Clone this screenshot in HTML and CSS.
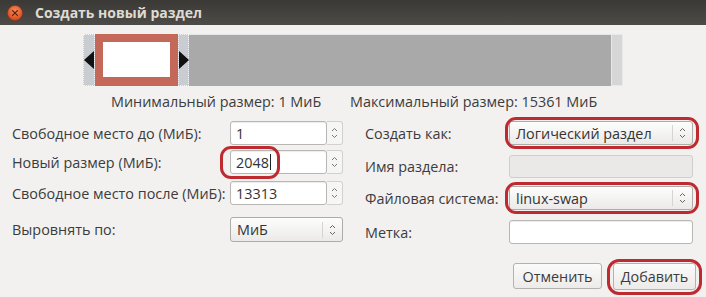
FILE: index.html
```html
<!DOCTYPE html>
<html lang="ru">
  <head>
    <meta charset="UTF-8" />
    <title>Создать новый раздел</title>
    <link rel="stylesheet" href="styles.css">
  </head>
  <body>
    <div class="window">
      <div class="titlebar">
        <svg class="close" width="16" height="16" viewBox="0 0 16 16">
          <defs>
            <radialGradient id="cg" cx="50%" cy="35%" r="65%">
              <stop offset="0" stop-color="#f58a5a" />
              <stop offset="1" stop-color="#d9471a" />
            </radialGradient>
          </defs>
          <circle cx="8" cy="8" r="7.5" fill="url(#cg)" stroke="#8a3416" stroke-width="0.6" />
          <path d="M5.6 5.6 L10.4 10.4 M10.4 5.6 L5.6 10.4" stroke="#5a2412" stroke-width="1.3" stroke-linecap="round" />
        </svg>
        <span class="title">Создать новый раздел</span>
      </div>

      <div class="content">
        <div class="disk">
          <div class="slot slot-left"><span class="arrow arrow-left"></span></div>
          <div class="part"><div class="part-inner"></div></div>
          <div class="slot slot-right"><span class="arrow arrow-right"></span></div>
          <div class="free"></div>
          <div class="disk-end"></div>
        </div>

        <div class="limits">
          <span class="limit-min">Минимальный размер: 1 МиБ</span>
          <span>Максимальный размер: 15361 МиБ</span>
        </div>

        <div class="form">
          <div class="col col-left">
            <div class="row">
              <label>Свободное место до (МиБ):</label>
              <div class="spin">
                <div class="entry">1</div>
                <div class="spin-btns">
                  <svg width="7" height="14" viewBox="0 0 7 14"><path d="M1 5 L3.5 2.5 L6 5 M1 9 L3.5 11.5 L6 9" fill="none" stroke="#7a7a7a" stroke-width="1" /></svg>
                </div>
              </div>
            </div>
            <div class="row row-2">
              <label>Новый размер (МиБ):</label>
              <div class="spin">
                <div class="entry">2048<span class="caret"></span></div>
                <div class="spin-btns">
                  <svg width="7" height="14" viewBox="0 0 7 14"><path d="M1 5 L3.5 2.5 L6 5 M1 9 L3.5 11.5 L6 9" fill="none" stroke="#7a7a7a" stroke-width="1" /></svg>
                </div>
                <span class="mark mark-size"></span>
              </div>
            </div>
            <div class="row row-3">
              <label>Свободное место после (МиБ):</label>
              <div class="spin">
                <div class="entry">13313</div>
                <div class="spin-btns">
                  <svg width="7" height="14" viewBox="0 0 7 14"><path d="M1 5 L3.5 2.5 L6 5 M1 9 L3.5 11.5 L6 9" fill="none" stroke="#7a7a7a" stroke-width="1" /></svg>
                </div>
              </div>
            </div>
            <div class="row row-4">
              <label>Выровнять по:</label>
              <div class="combo combo-small">
                <span class="combo-text">МиБ</span>
                <span class="combo-arrows">
                  <svg width="7" height="14" viewBox="0 0 7 14"><path d="M1 5 L3.5 2.5 L6 5 M1 9 L3.5 11.5 L6 9" fill="none" stroke="#666" stroke-width="1" /></svg>
                </span>
              </div>
            </div>
          </div>

          <div class="col col-right">
            <div class="row">
              <label>Создать как:</label>
              <div class="combo">
                <span class="combo-text">Логический раздел</span>
                <span class="combo-arrows">
                  <svg width="7" height="14" viewBox="0 0 7 14"><path d="M1 5 L3.5 2.5 L6 5 M1 9 L3.5 11.5 L6 9" fill="none" stroke="#666" stroke-width="1" /></svg>
                </span>
                <span class="mark"></span>
              </div>
            </div>
            <div class="row row-r2">
              <label>Имя раздела:</label>
              <div class="entry entry-wide disabled"></div>
            </div>
            <div class="row row-r3">
              <label>Файловая система:</label>
              <div class="combo">
                <span class="combo-text">linux-swap</span>
                <span class="combo-arrows">
                  <svg width="7" height="14" viewBox="0 0 7 14"><path d="M1 5 L3.5 2.5 L6 5 M1 9 L3.5 11.5 L6 9" fill="none" stroke="#666" stroke-width="1" /></svg>
                </span>
                <span class="mark"></span>
              </div>
            </div>
            <div class="row row-r4">
              <label>Метка:</label>
              <div class="entry entry-wide"></div>
            </div>
          </div>
        </div>

        <div class="actions">
          <button class="btn btn-cancel">Отменить</button>
          <button class="btn btn-add">Добавить<span class="mark mark-btn"></span></button>
        </div>
      </div>
    </div>
  </body>
</html>
```

FILE: styles.css
```css
body {
  margin: 0;
  padding: 0;
  width: 706px;
  height: 297px;
  overflow: hidden;
  font-family: "Open Sans", "DejaVu Sans", sans-serif;
  font-size: 14.4px;
  color: #3c3c3c;
  background-color: #f2f1f0;
}

.window {
  width: 706px;
  height: 297px;
  display: flex;
  flex-direction: column;
}

/* Title bar */
.titlebar {
  height: 25px;
  display: flex;
  align-items: center;
  background: linear-gradient(#3a3935, #4d4b47);
  flex-shrink: 0;
}

.close {
  margin-left: 7px;
  margin-right: 12px;
}

.title {
  color: #dfdbd2;
  font-weight: bold;
  font-size: 14px;
}

.content {
  display: flex;
  flex-direction: column;
}

/* Partition bar */
.disk {
  display: flex;
  margin-top: 9px;
  margin-left: 83px;
  width: 540px;
  height: 52px;
}

.slot {
  display: flex;
  align-items: center;
  background-color: #c9ccd0;
  border: 1px dotted #f4f4f4;
  box-sizing: border-box;
}

.slot-left {
  width: 12px;
  justify-content: flex-end;
}

.slot-right {
  width: 11px;
  justify-content: flex-start;
}

.arrow {
  width: 0;
  height: 0;
  border-top: 9px solid transparent;
  border-bottom: 9px solid transparent;
}

.arrow-left {
  border-right: 10px solid #111;
}

.arrow-right {
  border-left: 10px solid #111;
}

.part {
  width: 83px;
  background-color: #c4685a;
  padding: 8px 8px 9px 8px;
  box-sizing: border-box;
}

.part-inner {
  height: 100%;
  background-color: #fff;
}

.free {
  flex: 1;
  background-color: #a9a9a9;
  border-top: 1px solid #e6e6e6;
}

.disk-end {
  width: 12px;
  background-color: #d6d6d6;
  border: 1px solid #e8e8e8;
  box-sizing: border-box;
}

/* Min / max labels */
.limits {
  display: flex;
  margin-top: 7px;
  padding-left: 111px;
  height: 18px;
  line-height: 18px;
}

.limit-min {
  width: 239px;
}

/* Form */
.form {
  display: flex;
  margin-top: 10px;
  padding-left: 12px;
}

.col {
  display: flex;
  flex-direction: column;
}

.col-right {
  margin-left: 22px;
}

.row {
  display: flex;
  align-items: center;
  height: 24px;
}

.col-left label {
  width: 218px;
  white-space: nowrap;
}

.col-right label {
  width: 144px;
  white-space: nowrap;
}

.row-2 { margin-top: 5px; }
.row-3 { margin-top: 7px; }
.row-4 { margin-top: 12px; height: 25px; }
.row-r2 { margin-top: 10px; height: 23px; }
.row-r3 { margin-top: 8px; }
.row-r4 { margin-top: 10px; }

.entry {
  height: 100%;
  box-sizing: border-box;
  background-color: #fff;
  border: 1px solid #b9b7b3;
  border-radius: 3px;
  box-shadow: inset 0 1px 1px rgba(0, 0, 0, 0.08);
  padding-left: 5px;
  display: flex;
  align-items: center;
  color: #333;
}

.entry-wide {
  width: 184px;
}

.entry.disabled {
  background-color: #eae9e7;
  box-shadow: none;
  border-color: #d0cecb;
}

.spin {
  position: relative;
  display: flex;
  width: 113px;
  height: 100%;
}

.spin .entry {
  width: 97px;
}

.caret {
  width: 1px;
  height: 16px;
  background-color: #222;
  margin-left: 1px;
}

.spin-btns {
  width: 16px;
  display: flex;
  align-items: center;
  justify-content: center;
  background-color: #f6f6f5;
  border: 1px solid #d3d1ce;
  border-left: none;
  border-radius: 0 3px 3px 0;
  box-sizing: border-box;
}

.combo {
  position: relative;
  display: flex;
  align-items: center;
  width: 184px;
  height: 100%;
  box-sizing: border-box;
  border: 1px solid #aeaca8;
  border-radius: 3px;
  background: linear-gradient(#fdfdfd, #ebeae8);
  color: #333;
}

.combo-small {
  width: 113px;
}

.combo-text {
  flex: 1;
  padding-left: 6px;
}

.combo-arrows {
  width: 19px;
  height: 16px;
  border-left: 1px solid #d6d4d0;
  display: flex;
  align-items: center;
  justify-content: center;
}

/* Red annotation marks */
.mark {
  position: absolute;
  top: -5px;
  bottom: -5px;
  left: -5px;
  right: -7px;
  border: 3px solid #bd2a30;
  border-radius: 11px;
  pointer-events: none;
}

.mark-size {
  top: -4px;
  bottom: -5px;
  left: -10px;
  right: auto;
  width: 54px;
}

/* Buttons */
.actions {
  display: flex;
  justify-content: flex-end;
  gap: 11px;
  margin-top: 19px;
  padding-right: 10px;
}

.btn {
  position: relative;
  font-family: inherit;
  font-size: 14.4px;
  color: #3c3c3c;
  height: 26px;
  padding: 0;
  border: 1px solid #b4b2ae;
  border-radius: 3px;
  background: linear-gradient(#fbfbfb, #ecebe9);
}

.btn-cancel {
  width: 89px;
}

.btn-add {
  width: 83px;
  height: 27px;
}

.mark-btn {
  top: -5px;
  bottom: -6px;
  left: -7px;
  right: -7px;
  border-radius: 12px;
}
```
